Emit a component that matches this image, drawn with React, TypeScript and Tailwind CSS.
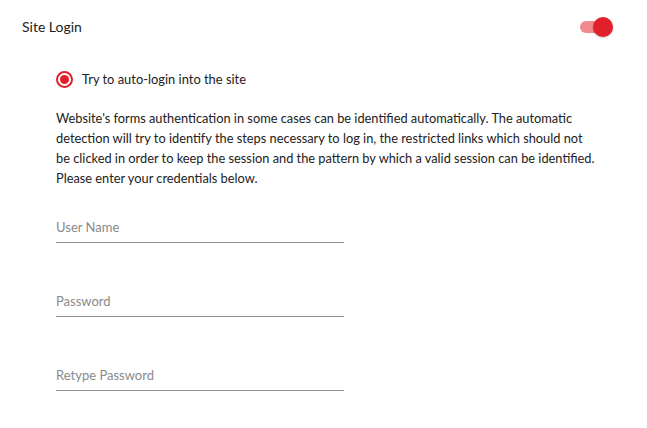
import { useState } from "react";

const FIELDS = ["User Name", "Password", "Retype Password"];

export default function App() {
  const [on, setOn] = useState(true);

  return (
    <div className="w-[647px] h-[428px] bg-white text-[#222] font-['Lato','Liberation_Sans',sans-serif]">
      <div className="flex items-center justify-between pl-[22px] pr-[34px] pt-[17px]">
        <span className="text-[14px] leading-[20px]">Site Login</span>
        <button
          type="button"
          onClick={() => setOn(!on)}
          className="relative h-[20px] w-[34px]"
          aria-label="Site Login"
        >
          <span className="absolute left-[1px] top-[4px] h-[12px] w-[28px] rounded-full bg-[#f08a8d]" />
          <span className="absolute right-0 top-0 h-[20px] w-[20px] rounded-full bg-[#e2202b] shadow-[0_1px_2px_rgba(0,0,0,0.25)]" />
        </button>
      </div>

      <div className="pl-[56px] pt-[32px]">
        <label className="flex items-center gap-[9px]">
          <span className="flex h-[17px] w-[17px] items-center justify-center rounded-full border-2 border-[#e2202b]">
            <span className="h-[9px] w-[9px] rounded-full bg-[#e2202b]" />
          </span>
          <span className="text-[12.9px] leading-[20px]">Try to auto-login into the site</span>
        </label>

        <p className="mt-[19px] w-[570px] text-[12.8px] leading-[20px]">
          Website's forms authentication in some cases can be identified automatically. The automatic
          <br />
          detection will try to identify the steps necessary to log in, the restricted links which should not
          <br />
          be clicked in order to keep the session and the pattern by which a valid session can be identified.
          <br />
          Please enter your credentials below.
        </p>

        <div className="mt-[26px] flex flex-col gap-[45px]">
          {FIELDS.map((f) => (
            <div key={f} className="w-[288px] border-b border-[#8f8f8f] pb-[4px]">
              <input
                placeholder={f}
                type={f === "User Name" ? "text" : "password"}
                className="w-full bg-transparent text-[13px] leading-[16px] outline-none placeholder:text-[#8a8a8a]"
              />
            </div>
          ))}
        </div>
      </div>
    </div>
  );
}
